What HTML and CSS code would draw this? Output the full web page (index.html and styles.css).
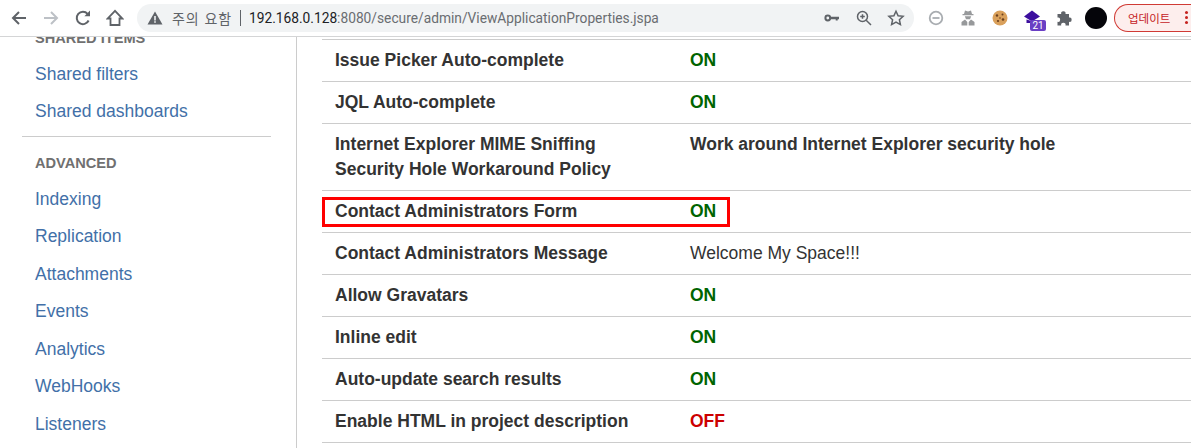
FILE: index.html
```html
<!DOCTYPE html>
<html lang="ko">
<head>
<meta charset="utf-8">
<title>View Application Properties</title>
<link rel="stylesheet" href="styles.css">
</head>
<body>
<header class="toolbar">
  <div class="nav">
    <svg class="ic" viewBox="0 0 18 18"><path d="M16 9H3M9 3 3 9l6 6" fill="none" stroke="#5f6368" stroke-width="2"/></svg>
    <svg class="ic" viewBox="0 0 18 18"><path d="M2 9h13M9 3l6 6-6 6" fill="none" stroke="#bdc1c6" stroke-width="2"/></svg>
    <svg class="ic" viewBox="0 0 18 18"><path d="M14.6 11.500A6.200 6.200 0 1 1 13.600 4.800" fill="none" stroke="#5f6368" stroke-width="2"/><path d="M10.400 7.200h5.600V1.600z" fill="#5f6368"/></svg>
    <svg class="ic" viewBox="0 0 18 18"><path d="M9 1.800 1.800 9.500h2.700V16h9V9.500h2.700z" fill="none" stroke="#5f6368" stroke-width="1.800"/></svg>
  </div>
  <div class="omni">
    <svg class="warn" viewBox="0 0 16 16"><path d="M8 1.500 15.500 14.500H.5z" fill="#5f6368"/><path d="M7.200 6h1.600v4.500H7.200zM7.200 11.300h1.600v1.500H7.200z" fill="#f1f3f4"/></svg>
    <span class="warn-text">주의 요함</span>
    <span class="sep"></span>
    <span class="url"><span class="host">192.168.0.128</span>:8080/secure/admin/ViewApplicationProperties.jspa</span>
    <span class="omni-icons">
      <svg class="ic" viewBox="0 0 18 18"><circle cx="4.800" cy="9" r="2.400" fill="none" stroke="#5f6368" stroke-width="2"/><path d="M7.500 7.800h8.500v2.400h-1.300v1.300h-2v-1.300H7.500z" fill="#5f6368"/></svg>
      <svg class="ic" viewBox="0 0 18 18"><circle cx="7.500" cy="7.500" r="5" fill="none" stroke="#5f6368" stroke-width="1.500"/><path d="M11.200 11.200 16 16M7.500 5.200v4.600M5.200 7.500h4.600" fill="none" stroke="#5f6368" stroke-width="1.500"/></svg>
      <svg class="ic" viewBox="0 0 18 18"><path d="m9 2.200 2.100 4.600 5 .5-3.700 3.400 1 4.900L9 13.100l-4.400 2.500 1-4.900-3.700-3.400 5-.5z" fill="none" stroke="#5f6368" stroke-width="1.500"/></svg>
    </span>
  </div>
  <div class="exts">
    <svg class="ic" viewBox="0 0 18 18"><circle cx="9" cy="9" r="6.300" fill="none" stroke="#a9adb1" stroke-width="1.800"/><path d="M5.500 9h7" stroke="#a9adb1" stroke-width="1.800"/></svg>
    <svg class="ic" viewBox="0 0 18 18"><path d="M6 1.500 9 2.500l3-1 1 3.500h1.500v1.200h-11V5H5zM5.800 7.200h6.400L11 10.200H7zM2.500 16.500v-3.500L6 10.500l2.300 2.500v3.500zM9.700 16.500V13l2.300-2.500 3.500 2.500v3.500z" fill="#97999b"/></svg>
    <svg class="ic" viewBox="0 0 18 18"><circle cx="9" cy="9" r="7.500" fill="#d9a05b"/><circle cx="6" cy="6.500" r="1.200" fill="#6b3f1d"/><circle cx="11.500" cy="5.500" r="1" fill="#6b3f1d"/><circle cx="12" cy="10.500" r="1.300" fill="#6b3f1d"/><circle cx="7" cy="12" r="1.100" fill="#6b3f1d"/><circle cx="9" cy="9" r=".8" fill="#6b3f1d"/></svg>
    <span class="badged">
      <svg class="ic" viewBox="0 0 18 18"><path d="M9 1.500 1 7.500l8 5 8-5z" fill="#3c0f9e"/><path d="M3.500 10.500v3.500H10v-1.500z" fill="#3c0f9e"/></svg>
      <span class="badge">21</span>
    </span>
    <svg class="ic" viewBox="0 0 18 18"><path d="M2.500 5H6.200a2.200 2.200 0 1 1 4.300 0H14v3.500a2.200 2.200 0 1 1 0 4.300V16.500h-3.500a2.200 2.200 0 1 0-4.300 0H2.500v-3.700a2.200 2.200 0 1 0 0-4.300z" fill="#5f6368"/></svg>
    <span class="avatar"></span>
    <span class="update">업데이트<span class="dots"></span></span>
  </div>
</header>
<main class="page">
  <aside class="sidebar">
    <div class="side-inner">
      <h4 class="side-head">SHARED ITEMS</h4>
      <a class="side-link">Shared filters</a>
      <a class="side-link">Shared dashboards</a>
      <hr class="side-rule">
      <h4 class="side-head">ADVANCED</h4>
      <a class="side-link">Indexing</a>
      <a class="side-link">Replication</a>
      <a class="side-link">Attachments</a>
      <a class="side-link">Events</a>
      <a class="side-link">Analytics</a>
      <a class="side-link">WebHooks</a>
      <a class="side-link">Listeners</a>
    </div>
  </aside>
  <section class="content">
    <table class="props">
      <tr><th>Issue Picker Auto-complete</th><td class="on">ON</td></tr>
      <tr><th>JQL Auto-complete</th><td class="on">ON</td></tr>
      <tr><th>Internet Explorer MIME Sniffing Security Hole Workaround Policy</th><td class="strong">Work around Internet Explorer security hole</td></tr>
      <tr><th><span class="mark"></span>Contact Administrators Form</th><td class="on">ON</td></tr>
      <tr><th>Contact Administrators Message</th><td>Welcome My Space!!!</td></tr>
      <tr><th>Allow Gravatars</th><td class="on">ON</td></tr>
      <tr><th>Inline edit</th><td class="on">ON</td></tr>
      <tr><th>Auto-update search results</th><td class="on">ON</td></tr>
      <tr><th>Enable HTML in project description</th><td class="off">OFF</td></tr>
    </table>
  </section>
</main>
</body>
</html>
```
FILE: styles.css
```css
* { box-sizing: border-box; }
html, body { margin: 0; height: 100%; overflow: hidden; background: #fff; }
body { font-family: "Liberation Sans", Arial, sans-serif; color: #333; font-size: 17.5px; }

.toolbar { display: flex; align-items: center; height: 37px; padding-bottom: 1px; border-bottom: 1px solid #d4d5d6; background: #fff; }
.ic { width: 18px; height: 18px; flex: none; display: block; }
.nav { display: flex; gap: 14px; padding-left: 10px; width: 137px; flex: none; }
.omni { display: flex; align-items: center; flex: none; width: 777px; height: 28px; border-radius: 14px; background: #f1f3f4; padding-left: 10px; }
.warn { width: 16px; height: 16px; flex: none; }
.warn-text { margin-left: 9px; color: #5f6368; font-family: "Noto Sans CJK KR", sans-serif; font-size: 14px; letter-spacing: .9px; white-space: nowrap; }
.sep { width: 1px; height: 16px; background: #5f6368; margin: 0 8px 0 8px; flex: none; }
.url { color: #6a6d71; font-family: Roboto, sans-serif; font-size: 13.750px; white-space: nowrap; flex: 1; }
.host { color: #202124; }
.omni-icons { display: flex; gap: 14px; padding-right: 9px; }
.exts { display: flex; align-items: center; gap: 14px; padding-left: 13px; flex: 1; min-width: 0; overflow: hidden; }
.badged { position: relative; display: block; }
.badge { position: absolute; left: 7px; top: 11px; width: 16px; height: 11px; border-radius: 2px; background: #6a3fc4; color: #fff; font-size: 10px; line-height: 11px; text-align: center; font-family: Roboto, sans-serif; }
.avatar { width: 22px; height: 22px; border-radius: 50%; background: #05050a; flex: none; margin-left: -2px; margin-right: -7px; }
.update { display: flex; align-items: center; flex: none; height: 28px; padding-left: 13px; width: 90px; border: 1px solid #d03a34; border-right: none; border-radius: 14px 0 0 14px; background: #fdeeed; color: #c5221f; font-family: "Noto Sans CJK KR", sans-serif; font-size: 11.500px; white-space: nowrap; }
.dots { width: 3px; height: 3px; margin-left: 15px; flex: none; border-radius: 50%; background: #c5221f; box-shadow: 0 -5px #c5221f, 0 5px #c5221f; }

.page { display: flex; height: 411px; overflow: hidden; }
.sidebar { width: 297px; flex: none; border-right: 1px solid #ccc; overflow: hidden; padding: 0 25px 0 22px; }
.side-inner { margin-top: -9.300px; }
.side-head { margin: 0; padding-left: 13px; font-size: 14.600px; line-height: 20px; font-weight: 700; color: #707070; }
.side-link { display: block; padding-left: 13px; font-size: 17.500px; line-height: 37.500px; color: #4270a8; }
.side-head + .side-link { margin-top: 8px; }
.side-rule { border: 0; border-top: 1px solid #ccc; margin: 5px 0 16px; }

.content { flex: 1; overflow: hidden; padding-left: 25px; }
.props { width: 100%; border-collapse: collapse; margin-top: 2px; border-top: 1px solid #ccc; }
.props th, .props td { padding: 8px 13px; line-height: 25px; border-bottom: 1px solid #ccc; text-align: left; vertical-align: top; font-size: 17.500px; }
.props th { width: 355px; font-weight: 700; position: relative; }
.on { color: #006400; font-weight: 700; }
.off { color: #c00; font-weight: 700; }
.strong { font-weight: 700; }
.mark { position: absolute; left: 0; top: 6px; width: 408px; height: 30px; border: 3px solid #f00; }
```
